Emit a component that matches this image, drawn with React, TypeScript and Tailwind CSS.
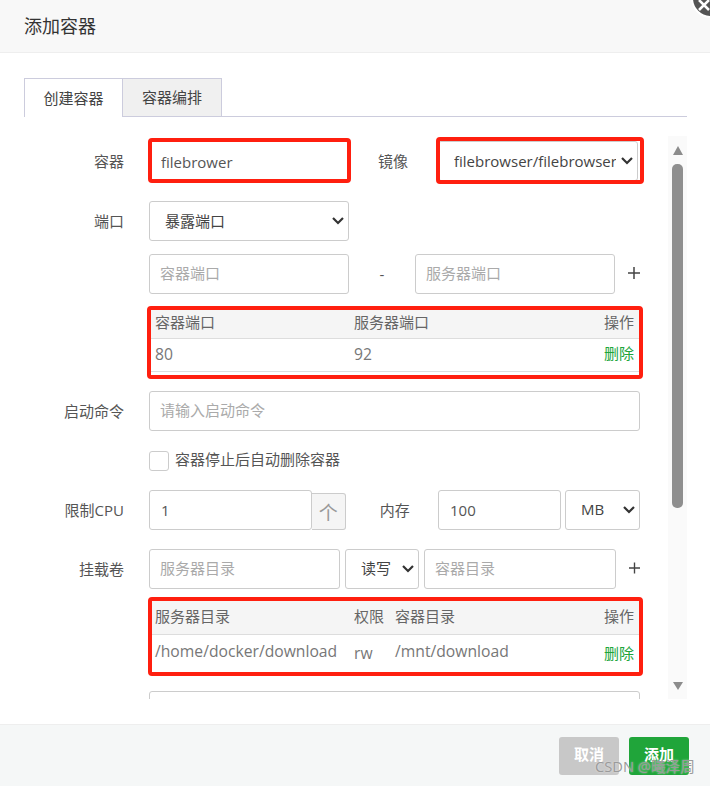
import type { ReactNode } from "react";

const inputClass =
  "h-10 rounded-[3px] border border-[#cccccc] bg-white px-[11px] text-[15px] text-[#555555] outline-none placeholder:text-[#aaaaaa]";
const emptyInputClass =
  "h-10 rounded-[3px] border border-[#cccccc] bg-white pb-[2px] pl-[10px] pr-[11px] text-[15px] text-[#555555] outline-none placeholder:text-[#aaaaaa]";

function Chevron() {
  return (
    <svg
      viewBox="0 0 12 8"
      className="pointer-events-none absolute right-[5px] top-[16px] h-2 w-3 text-[#333333]"
      fill="none"
      stroke="currentColor"
      strokeWidth="2.2"
    >
      <path d="M1 1l5 5 5-5" />
    </svg>
  );
}

function Select({ value, className }: { value: string; className: string }) {
  return (
    <div className={`relative shrink-0 ${className}`}>
      <select className="h-10 w-full appearance-none rounded-[3px] border border-[#cccccc] bg-white pl-[15px] pr-[21px] text-[15px] text-[#444444] outline-none">
        <option>{value}</option>
      </select>
      <Chevron />
    </div>
  );
}

function Row({ label, children, className, labelClass = "" }: { label?: string; children: ReactNode; className: string; labelClass?: string }) {
  return (
    <div className={`flex items-center ${className}`}>
      <label className={`w-[100px] shrink-0 text-right text-[15px] text-[#555555] ${labelClass}`}>{label}</label>
      <div className="ml-[25px] flex w-[491px] items-center">{children}</div>
    </div>
  );
}

function Plus() {
  return (
    <svg viewBox="0 0 12 12" className="ml-[13px] h-3 w-3 -translate-y-[1px] text-[#444444]" fill="none" stroke="currentColor" strokeWidth="1.5">
      <path d="M6 0v12M0 6h12" />
    </svg>
  );
}

function RedBox({ className }: { className: string }) {
  return <div className={`pointer-events-none absolute rounded-[4px] border-[4px] border-[#ff1f0f] ${className}`} />;
}

export default function App() {
  return (
    <div className="relative flex h-[786px] w-[710px] flex-col overflow-hidden bg-white font-['Open_Sans','Noto_Sans_CJK_SC',sans-serif]">
      <header className="flex h-[53px] shrink-0 items-center border-b border-[#eeeeee] bg-[#f8f8f8] pl-6 text-[18px] text-[#333333]">
        添加容器
      </header>

      <div className="absolute -right-[21px] -top-[22px] flex h-[40px] w-[40px] items-center justify-center rounded-full border-[2px] border-white bg-[#555555]">
        <svg viewBox="0 0 12 12" className="h-3 w-3 -translate-x-[7px] translate-y-[7px] text-white" fill="none" stroke="currentColor" strokeWidth="2.5">
          <path d="M1 1l10 10M11 1L1 11" />
        </svg>
      </div>

      <main className="flex min-h-0 flex-1 flex-col px-6 pt-[25px]">
        <div className="flex h-[39px] w-[663px] shrink-0 border-b border-[#ccccdd] text-[15px] text-[#444444]">
          <div className="flex h-[39px] w-[99px] items-center justify-center border-l border-r border-t border-[#ccccdd] bg-white">创建容器</div>
          <div className="flex h-[39px] w-[99px] items-center justify-center border-b border-r border-t border-[#ccccdd] bg-[#f0f0f0]">容器编排</div>
        </div>

        <div className="mt-[19px] flex h-[563px] w-[663px] shrink-0">
          <div className="w-[644px] shrink-0 overflow-hidden pt-[5px]">
            <Row label="容器" className="h-10">
              <div className="relative w-[200px]">
                <input readOnly defaultValue="filebrower" className={`${inputClass} w-full pt-[1px]`} />
                <RedBox className="-bottom-[2px] -left-[1px] -right-[2px] -top-[3px]" />
              </div>
              <span className="ml-[29px] w-[60px] text-[15px] text-[#555555]">镜像</span>
              <div className="relative">
                <Select value="filebrowser/filebrowser" className="w-[200px]" />
                <RedBox className="-bottom-[3px] -left-[2px] -right-[6px] -top-[4px]" />
              </div>
            </Row>

            <Row label="端口" className="mt-5 h-10">
              <Select value="暴露端口" className="w-[200px]" />
            </Row>

            <Row className="mt-[13px] h-10">
              <input placeholder="容器端口" className={`${emptyInputClass} w-[200px]`} />
              <span className="w-[66px] text-center text-[15px] text-[#555555]">-</span>
              <input placeholder="服务器端口" className={`${emptyInputClass} w-[200px]`} />
              <Plus />
            </Row>

            <Row className="mt-[16px]">
              <div className="relative w-full">
                <table className="w-full table-fixed text-left text-[15px] text-[#666666]">
                  <thead>
                    <tr className="h-[28px] border-b border-[#dddddd] bg-[#f5f5f5]">
                      <th className="w-[205px] pb-[4px] pl-[6px] font-normal">容器端口</th>
                      <th className="pb-[4px] font-normal">服务器端口</th>
                      <th className="w-[80px] pb-[4px] pr-[6px] text-right font-normal">操作</th>
                    </tr>
                  </thead>
                  <tbody>
                    <tr className="h-[33px] border-b border-[#dddddd] text-[15.7px] text-[#777777]">
                      <td className="pl-[6px]">80</td>
                      <td>92</td>
                      <td className="pb-[2px] pr-[6px] text-right text-[15px] text-[#20a53a]">删除</td>
                    </tr>
                  </tbody>
                </table>
                <RedBox className="-bottom-[7px] -left-[2px] -right-[3px] -top-[4px]" />
              </div>
            </Row>

            <Row label="启动命令" labelClass="pt-[2px]" className="mt-[19px] h-10">
              <input placeholder="请输入启动命令" className={`${emptyInputClass} w-full`} />
            </Row>

            <Row className="mt-5 h-5">
              <span className="h-5 w-5 rounded-[3px] border border-[#cccccc] bg-white" />
              <span className="ml-[6px] pb-[3px] text-[15px] text-[#555555]">容器停止后自动删除容器</span>
            </Row>

            <Row label="限制CPU" labelClass="pt-[2px]" className="mt-[19px] h-10">
              <input readOnly defaultValue="1" className={`${inputClass} w-[163px]`} />
              <div className="flex h-[37px] w-[34px] items-center justify-center self-end rounded-r-[3px] border-b border-r border-t border-[#cccccc] bg-[#f5f5f5] pt-[5px] text-[19px] leading-none text-[#999999]">
                个
              </div>
              <span className="ml-[34px] w-[59px] pt-[2px] text-[15px] text-[#555555]">内存</span>
              <input readOnly defaultValue="100" className={`${inputClass} w-[123px]`} />
              <Select value="MB" className="ml-1 w-[75px]" />
            </Row>

            <Row label="挂载卷" labelClass="pt-[2px]" className="mt-[19px] h-10">
              <input placeholder="服务器目录" className={`${emptyInputClass} w-[191px]`} />
              <Select value="读写" className="ml-[5px] w-[74px]" />
              <input placeholder="容器目录" className={`${emptyInputClass} ml-[5px] w-[192px]`} />
              <Plus />
            </Row>

            <Row className="mt-3">
              <div className="relative w-full">
                <table className="w-full table-fixed text-left text-[15px] text-[#666666]">
                  <thead>
                    <tr className="h-[34px] border-b border-[#dddddd] bg-[#f5f5f5]">
                      <th className="w-[205px] pb-[2px] pl-[6px] font-normal">服务器目录</th>
                      <th className="w-[41px] pb-[2px] font-normal">权限</th>
                      <th className="pb-[2px] font-normal">容器目录</th>
                      <th className="w-[80px] pb-[2px] pr-[6px] text-right font-normal">操作</th>
                    </tr>
                  </thead>
                  <tbody>
                    <tr className="h-[37px] text-[15.7px] text-[#777777]">
                      <td className="pb-[2px] pl-[6px]">/home/docker/download</td>
                      <td className="pt-[1px]">rw</td>
                      <td className="pb-[2px]">/mnt/download</td>
                      <td className="pb-[1px] pr-[6px] text-right text-[15px] text-[#20a53a]">删除</td>
                    </tr>
                  </tbody>
                </table>
                <RedBox className="-bottom-[4px] -left-[1px] -right-[3px] -top-[4px]" />
              </div>
            </Row>

            <Row className="mt-[19px] h-10">
              <input className={`${inputClass} w-full`} />
            </Row>
          </div>

          <div className="flex w-[19px] shrink-0 flex-col items-center bg-[#fafafa] pt-[10px]">
            <div className="h-0 w-0 border-x-[5.5px] border-b-[9px] border-x-transparent border-b-[#8c8c8c]" />
            <div className="mt-[9px] h-[344px] w-[11px] rounded-[5px] bg-[#8f8f8f]" />
            <div className="mt-[174px] h-0 w-0 border-x-[5.5px] border-t-[8px] border-x-transparent border-t-[#8c8c8c]" />
          </div>
        </div>
      </main>

      <footer className="flex h-[62px] shrink-0 items-start justify-end gap-[10px] border-t border-[#eeeeee] bg-[#f5f7f7] pr-[21px] pt-3">
        <button className="h-[38px] w-[60px] rounded-[3px] bg-[#c8c8c8] pb-1 text-[15px] font-bold text-white">取消</button>
        <button className="h-[38px] w-[60px] rounded-[3px] bg-[#20a53a] pb-1 text-[15px] font-bold text-white">添加</button>
      </footer>

      <div className="absolute bottom-[9px] right-[15px] text-[14.7px] text-[#9a9a9a] [text-shadow:0_0_2px_rgba(255,255,255,0.6)]">CSDN @曦泽周</div>
    </div>
  );
}
